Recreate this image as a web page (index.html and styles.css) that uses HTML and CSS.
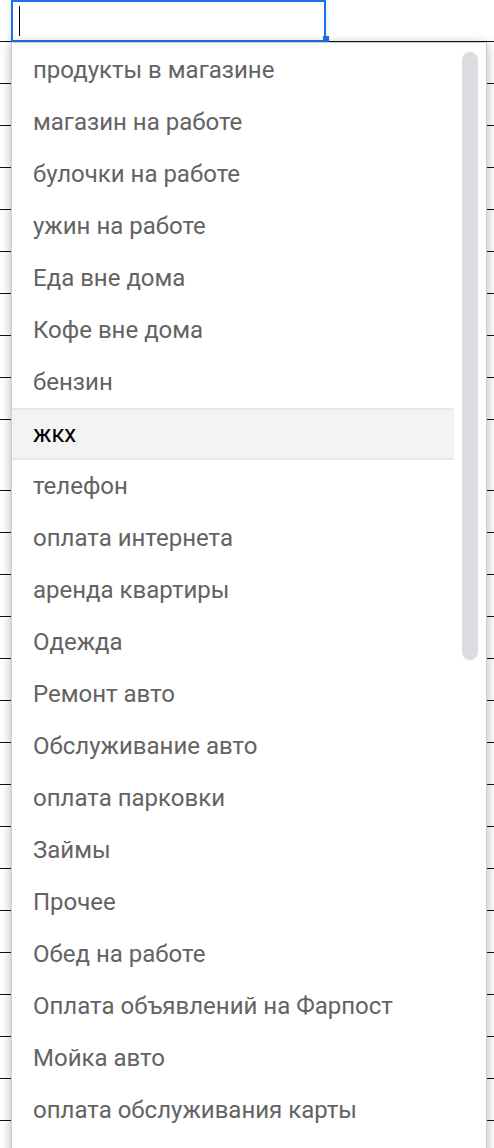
FILE: index.html
```html
<!DOCTYPE html>
<html lang="ru">
<head>
    <meta charset="UTF-8">
    <title>Категории расходов</title>
    <link rel="stylesheet" href="styles.css">
</head>
<body>
    <div class="sheet">
        <div class="row first"></div>
        <div class="row"></div><div class="row"></div><div class="row"></div><div class="row"></div>
        <div class="row"></div><div class="row"></div><div class="row"></div><div class="row"></div>
        <div class="row"></div>
        <div class="row tall"></div>
        <div class="row"></div><div class="row"></div><div class="row"></div><div class="row"></div>
        <div class="row"></div><div class="row"></div><div class="row"></div><div class="row"></div>
        <div class="row"></div><div class="row"></div><div class="row"></div><div class="row"></div>
        <div class="row"></div><div class="row"></div><div class="row"></div><div class="row"></div>
    </div>

    <div class="editor">
        <span class="caret"></span>
        <span class="handle"></span>
    </div>

    <div class="dropdown">
        <ul class="options">
            <li>продукты в магазине</li>
            <li>магазин на работе</li>
            <li>булочки на работе</li>
            <li>ужин на работе</li>
            <li>Еда вне дома</li>
            <li>Кофе вне дома</li>
            <li>бензин</li>
            <li class="active">жкх</li>
            <li>телефон</li>
            <li>оплата интернета</li>
            <li>аренда квартиры</li>
            <li>Одежда</li>
            <li>Ремонт авто</li>
            <li>Обслуживание авто</li>
            <li>оплата парковки</li>
            <li>Займы</li>
            <li>Прочее</li>
            <li>Обед на работе</li>
            <li>Оплата объявлений на Фарпост</li>
            <li>Мойка авто</li>
            <li>оплата обслуживания карты</li>
        </ul>
        <div class="track">
            <div class="thumb"></div>
        </div>
    </div>
</body>
</html>
```

FILE: styles.css
```css
html, body {
    margin: 0;
    padding: 0;
}

body {
    width: 494px;
    height: 1148px;
    overflow: hidden;
    position: relative;
    background-color: #fff;
    font-family: Roboto, "Noto Sans", Arial, sans-serif;
}

.sheet {
    display: flex;
    flex-direction: column;
}

.row {
    height: 41px;
    border-bottom: 1px solid #111;
}

.row.tall {
    height: 70px;
}

.editor {
    position: absolute;
    left: 11px;
    top: 0;
    width: 311px;
    height: 38px;
    border: 2px solid #1a73e8;
    background-color: #fff;
    box-shadow: 0 2px 6px rgba(0,0,0,0.15);
}

.caret {
    position: absolute;
    left: 6px;
    top: 4px;
    width: 1px;
    height: 30px;
    background-color: #000;
}

.handle {
    position: absolute;
    right: -5px;
    bottom: -2px;
    width: 6px;
    height: 6px;
    background-color: #1a73e8;
}

.dropdown {
    position: absolute;
    left: 11px;
    top: 42px;
    width: 474px;
    height: 1140px;
    display: flex;
    align-items: flex-start;
    background-color: #fff;
    border: 1px solid #ccc;
    box-shadow: 0 2px 10px rgba(0,0,0,0.3);
}

.options {
    list-style: none;
    margin: 0;
    padding: 1px 0 0;
    width: 442px;
}

.options li {
    box-sizing: border-box;
    height: 52px;
    padding-left: 21px;
    display: flex;
    align-items: center;
    font-size: 24px;
    color: #636363;
}

.options li.active {
    background-color: #f3f3f3;
    border-top: 2px solid #e8e8e8;
    border-bottom: 2px solid #e8e8e8;
    color: #000;
}

.track {
    flex: 1;
    display: flex;
    justify-content: center;
    padding-top: 9px;
}

.thumb {
    width: 16px;
    height: 608px;
    border-radius: 8px;
    background-color: #dadce0;
}
```
